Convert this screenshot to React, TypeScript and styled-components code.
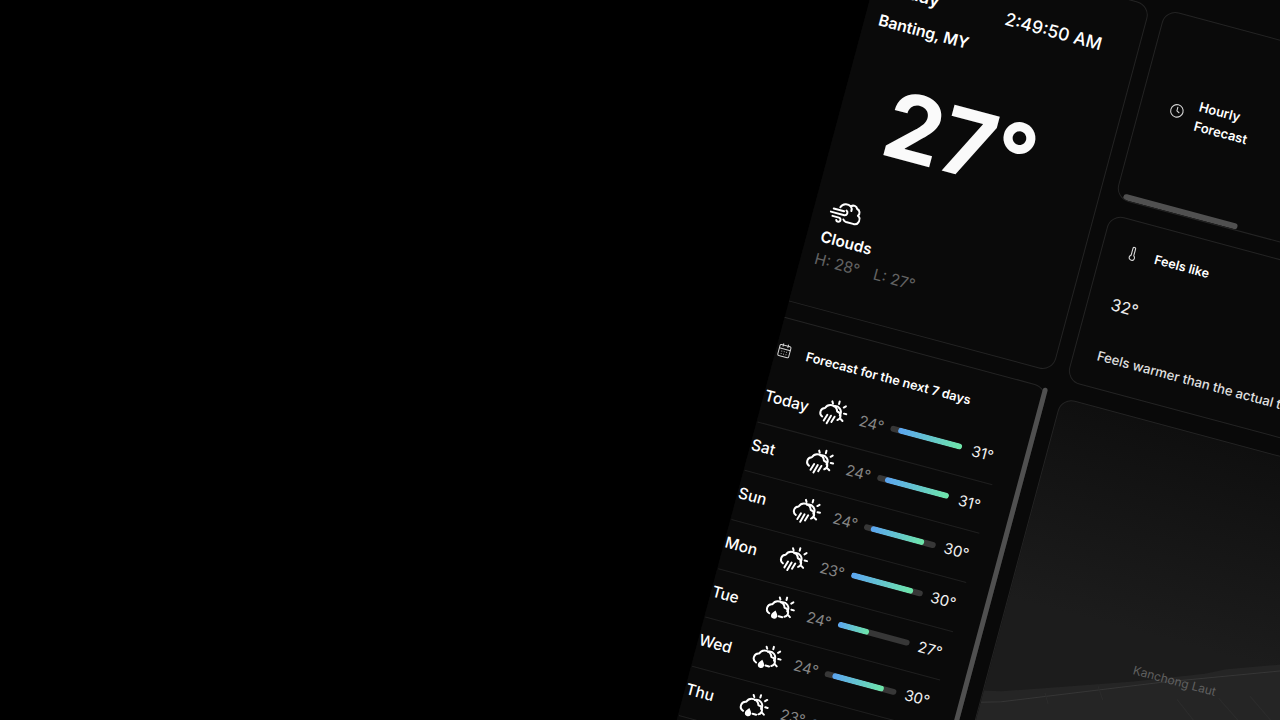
import styled, { createGlobalStyle } from "styled-components";
import { CalendarDays, Clock, Thermometer } from "lucide-react";

const GlobalStyle = createGlobalStyle`
  html, body {
    margin: 0;
    background: #000;
  }
  body {
    font-family: Inter, "Liberation Sans", sans-serif;
    color: #fff;
  }
`;

const Stage = styled.div`
  width: 1280px;
  height: 720px;
  overflow: hidden;
  background: #000;
`;

const Dashboard = styled.div`
  box-sizing: border-box;
  width: 640px;
  height: 900px;
  padding-top: 47px;
  overflow: hidden;
  background: #090909;
  transform-origin: 0 0;
  transform: rotate(15deg) translate(840px, -340px);
  display: grid;
  grid-template-columns: 272.5px 1fr;
  column-gap: 15.5px;
`;

const Column = styled.div`
  display: flex;
  flex-direction: column;
  min-width: 0;
`;

const Card = styled.section`
  box-sizing: border-box;
  position: relative;
  border: 1px solid #242424;
  border-radius: 14px;
  background: #0a0a0a;
  overflow: hidden;
`;

const CurrentCard = styled(Card)`
  width: 295.5px;
  height: 380px;
  margin-left: -23px;
  padding: 37px 36px 0;
`;

const TopRow = styled.div`
  display: flex;
  justify-content: space-between;
  align-items: center;
  height: 24px;
`;

const DayName = styled.div`
  font-size: 18px;
  font-weight: 600;
`;

const LocalTime = styled.div`
  font-size: 17.6px;
  font-weight: 500;
`;

const City = styled.div`
  margin-top: 11px;
  font-size: 15.8px;
  line-height: 24px;
  font-weight: 600;
`;

const BigTemp = styled.div`
  margin-top: 39px;
  height: 90px;
  font-size: 92px;
  line-height: 90px;
  font-weight: 700;
  text-align: center;
  color: #fafafa;
`;

const ConditionIcon = styled.div`
  margin-top: 41px;
  margin-left: 2px;
  height: 28px;
  color: #fff;
`;

const Condition = styled.div`
  margin-top: 4px;
  font-size: 15.5px;
  line-height: 24px;
  font-weight: 600;
`;

const HighLow = styled.div`
  display: flex;
  gap: 14.5px;
  font-size: 15.5px;
  line-height: 22px;
  color: #636363;
`;

const ForecastCard = styled(Card)`
  width: 295.5px;
  height: 640px;
  margin-top: 15.5px;
  margin-left: -23px;
  padding: 21px 27.5px 0 23px;
  overflow: visible;
`;

const ForecastHead = styled.div`
  display: flex;
  align-items: center;
  gap: 15px;
  height: 22px;
  margin-bottom: 14.5px;
  font-size: 12.7px;
  font-weight: 600;
  color: #d4d4d4;
`;

const HeadText = styled.span`
  color: #fff;
`;

const Row = styled.div`
  box-sizing: border-box;
  display: flex;
  align-items: center;
  height: 50.7px;
  padding-bottom: 5px;
  border-bottom: 1px solid #1f1f1f;
`;

const DayLabel = styled.div`
  width: 57.5px;
  font-size: 15.5px;
  font-weight: 500;
`;

const Low = styled.div`
  width: 39.5px;
  margin-right: 6.5px;
  font-size: 15px;
  text-align: right;
  color: #858585;
`;

const High = styled.div`
  width: 43px;
  margin-right: -4px;
  flex: none;
  font-size: 15px;
  text-align: center;
  color: #f2f2f2;
`;

const Track = styled.div`
  position: relative;
  flex: none;
  width: 74.5px;
  height: 6px;
  border-radius: 3px;
  background: #373737;
  overflow: hidden;
`;

const Fill = styled.div`
  position: absolute;
  top: 0;
  bottom: 0;
  border-radius: 3px;
  background: linear-gradient(90deg, #5ba4f2, #6ee7a8);
`;

const ScrollThumb = styled.div`
  position: absolute;
  top: 0;
  right: -1.5px;
  width: 5.5px;
  height: 630px;
  border-radius: 3px;
  background: #505050;
`;

const HourlyCard = styled(Card)`
  height: 195.5px;
  padding: 0 0 5px 29px;
  display: flex;
  align-items: center;
`;

const LabelRow = styled.div`
  display: flex;
  align-items: center;
  gap: 13px;
  color: #d4d4d4;
`;

const Label = styled.div`
  width: 60px;
  font-size: 13px;
  line-height: 20px;
  font-weight: 600;
  color: #fff;
`;

const FeelsLabel = styled(Label)`
  width: auto;
  margin-left: 1.5px;
  font-size: 12.6px;
`;

const HourlyScroll = styled.div`
  position: absolute;
  left: 7px;
  bottom: 0;
  width: 118px;
  height: 6px;
  border-radius: 3px;
  background: #505050;
`;

const FeelsCard = styled(Card)`
  height: 173px;
  margin-top: 16px;
  padding: 22px 0 0 23px;
`;

const FeelsValue = styled.div`
  margin-top: 33.5px;
  font-size: 16.5px;
  line-height: 22px;
  color: #eee;
`;

const FeelsText = styled.div`
  margin-top: 31.5px;
  font-size: 13.2px;
  font-weight: 500;
  line-height: 20px;
  white-space: nowrap;
  color: #e0e0e0;
`;

const MapCard = styled(Card)`
  height: 460px;
  margin-top: 17px;
  background: linear-gradient(180deg, #0f0f0f 0%, #1c1c1c 45%);
`;

const MapArt = styled.svg`
  display: block;
  width: 100%;
  height: 100%;
`;

const MapLabel = styled.span`
  position: absolute;
  left: 139px;
  top: 236px;
  font-size: 12px;
  line-height: 16px;
  color: #606060;
`;

const RowIcon = styled.svg`
  flex: none;
  margin: 0 -1px;
`;

const WindIcon = styled.svg`
  display: block;
  margin-top: -2px;
`;

function RainSunIcon({ hail }: { hail?: boolean }) {
  return (
    <RowIcon width="30" height="30" viewBox="0 0 24 24" fill="none" stroke="#fff" strokeWidth="1.6" strokeLinecap="round" strokeLinejoin="round">
      <path d="M11.5 7a4.6 4.6 0 0 1 6.6 5.6" />
      <path d="M15.2 2v2M9.5 3.4l.9 1.5M21 4.4l-1.4 1.4M23 10.5h-2M21.4 16.5l-1.6-1" />
      {hail ? (
        <>
          <path d="M4.6 17.8A3.9 3.9 0 0 1 5.2 10.2a5.3 5.3 0 0 1 10.1.2 3.7 3.7 0 0 1 1.8 7" />
          <path d="M12.5 18.2h3" />
          <path d="M8.9 14.4c1.6 1.9 2.5 3 2.5 4.2a2.5 2.5 0 0 1-5 0c0-1.2.9-2.3 2.5-4.2Z" fill="#fff" stroke="none" />
        </>
      ) : (
        <>
          <path d="M4.8 17.2A3.8 3.8 0 0 1 5.2 10a5.3 5.3 0 0 1 10.1.2 3.6 3.6 0 0 1 2 6.6" />
          <path d="M8.4 14.8 6.8 20M11.4 14.8 9.6 21.5M14.4 14.8 13 19.5" />
        </>
      )}
    </RowIcon>
  );
}

function WindCloudIcon() {
  return (
    <WindIcon width="32" height="32" viewBox="0 0 24 24" fill="none" stroke="#fff" strokeWidth="1.5" strokeLinecap="round" strokeLinejoin="round">
      <path d="M7 8A5 5 0 0 1 14.5 5.4 3 3 0 0 1 19.6 6 3 3 0 0 1 21.4 10.8 3.6 3.6 0 0 1 19.4 17.6H14A3 3 0 0 1 11.6 16.3" />
      <path d="M14.5 5.4a3.6 3.6 0 0 1 1.2 3.2" />
      <path d="M2.5 10.2h8M1 13h10.5a2 2 0 0 0 .6-3.8M3 15.8h5a1.6 1.6 0 1 1-1.5 2.2" />
    </WindIcon>
  );
}

const days = [
  { day: "Today", low: 24, high: 31, from: 12, to: 100, hail: false },
  { day: "Sat", low: 24, high: 31, from: 12, to: 100, hail: false },
  { day: "Sun", low: 24, high: 30, from: 10, to: 84, hail: false },
  { day: "Mon", low: 23, high: 30, from: 0, to: 87, hail: false },
  { day: "Tue", low: 24, high: 27, from: 0, to: 43, hail: true },
  { day: "Wed", low: 24, high: 30, from: 12, to: 82, hail: true },
  { day: "Thu", low: 23, high: 30, from: 0, to: 84, hail: true },
];

export default function App() {
  return (
    <>
      <GlobalStyle />
      <Stage>
        <Dashboard>
          <Column>
            <CurrentCard>
              <TopRow>
                <DayName>Friday</DayName>
                <LocalTime>2:49:50 AM</LocalTime>
              </TopRow>
              <City>Banting, MY</City>
              <BigTemp>27°</BigTemp>
              <ConditionIcon>
                <WindCloudIcon />
              </ConditionIcon>
              <Condition>Clouds</Condition>
              <HighLow>
                <span>H: 28°</span>
                <span>L: 27°</span>
              </HighLow>
            </CurrentCard>
            <ForecastCard>
              <ScrollThumb />
              <ForecastHead>
                <CalendarDays size={15} strokeWidth={1.6} />
                <HeadText>Forecast for the next 7 days</HeadText>
              </ForecastHead>
              {days.map((d) => (
                <Row key={d.day}>
                  <DayLabel>{d.day}</DayLabel>
                  <RainSunIcon hail={d.hail} />
                  <Low>{d.low}°</Low>
                  <Track>
                    <Fill style={{ left: `${d.from}%`, width: `${d.to - d.from}%` }} />
                  </Track>
                  <High>{d.high}°</High>
                </Row>
              ))}
            </ForecastCard>
          </Column>
          <Column>
            <HourlyCard>
              <LabelRow>
                <Clock size={15} strokeWidth={1.7} />
                <Label>Hourly Forecast</Label>
              </LabelRow>
              <HourlyScroll />
            </HourlyCard>
            <FeelsCard>
              <LabelRow>
                <Thermometer size={16} strokeWidth={1.7} />
                <FeelsLabel>Feels like</FeelsLabel>
              </LabelRow>
              <FeelsValue>32°</FeelsValue>
              <FeelsText>Feels warmer than the actual temperature.</FeelsText>
            </FeelsCard>
            <MapCard>
              <MapArt viewBox="0 0 352 460" preserveAspectRatio="none">
                <path d="M-10 306 17 300 80 278 143 256 210 230 218 226 230 220 280 202 360 176V470H-10Z" fill="#252525" />
                <g fill="none" stroke="#363636" strokeWidth="1">
                  <path d="M0 316 20 310 169 250 282 208 360 180" />
                  <path d="M60 290l6 10M110 270l8 12M190 262l40 30M230 250l60 40M260 240l50 34" stroke="#2c2c2c" />
                </g>
              </MapArt>
              <MapLabel>Kanchong Laut</MapLabel>
            </MapCard>
          </Column>
        </Dashboard>
      </Stage>
    </>
  );
}
